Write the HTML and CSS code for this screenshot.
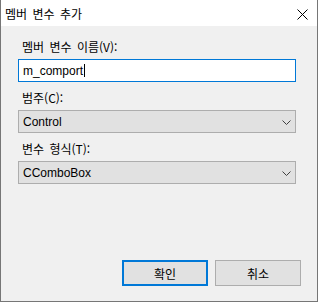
FILE: index.html
```html
<!DOCTYPE html>
<html lang="ko">
<head>
  <meta charset="UTF-8">
  <title>멤버 변수 추가</title>
  <link rel="stylesheet" href="styles.css">
</head>
<body>

  <div class="window">
    <div class="titlebar">
      <span class="title">멤버 변수 추가</span>
      <span class="close">
        <svg width="11" height="11" viewBox="0 0 11 11">
          <path d="M0.5 0.5 L10.5 10.5 M10.5 0.5 L0.5 10.5" stroke="#000" stroke-width="1" fill="none"/>
        </svg>
      </span>
    </div>

    <div class="content">
      <div class="form">
        <label class="label" for="name">멤버 변수 이름(V):</label>
        <div class="edit" id="name"><span class="value">m_comport</span><span class="caret"></span></div>

        <label class="label">범주(C):</label>
        <div class="combo">
          <span class="value">Control</span>
          <svg class="chevron" width="9" height="5" viewBox="0 0 9 5">
            <path d="M0.5 0.5 L4.5 4.5 L8.5 0.5" stroke="#404040" stroke-width="1" fill="none"/>
          </svg>
        </div>

        <label class="label">변수 형식(T):</label>
        <div class="combo">
          <span class="value">CComboBox</span>
          <svg class="chevron" width="9" height="5" viewBox="0 0 9 5">
            <path d="M0.5 0.5 L4.5 4.5 L8.5 0.5" stroke="#404040" stroke-width="1" fill="none"/>
          </svg>
        </div>
      </div>

      <div class="footer">
        <button class="btn default">확인</button>
        <button class="btn">취소</button>
      </div>
    </div>
  </div>

</body>
</html>
```

FILE: styles.css
```css
html, body {
  margin: 0;
  padding: 0;
}

body {
  font-family: "Noto Sans CJK KR", "Noto Sans", sans-serif;
  font-size: 12px;
  word-spacing: 2px;
  color: #000;
  background-color: #f0f0f0;
}

.window {
  width: 318px;
  height: 302px;
  box-sizing: border-box;
  border: 1px solid #767676;
  border-top: none;
  background-color: #f0f0f0;
  display: flex;
  flex-direction: column;
}

.titlebar {
  height: 26px;
  background-color: #fff;
  display: flex;
  align-items: center;
  justify-content: space-between;
  padding: 0 9px 0 4px;
  flex-shrink: 0;
}

.title {
  line-height: 16px;
  padding-top: 1px;
}

.close {
  display: flex;
  margin-top: 2px;
}

.content {
  flex: 1;
  display: flex;
  flex-direction: column;
}

.form {
  padding: 13px 21px 0 17px;
  display: flex;
  flex-direction: column;
}

.label {
  display: block;
  line-height: 16px;
  height: 16px;
  margin-bottom: 4px;
  padding-left: 4px;
}

.edit,
.combo {
  height: 23px;
  box-sizing: border-box;
  margin-bottom: 8px;
  display: flex;
  align-items: center;
  padding: 0 4px;
  line-height: 16px;
}

.value {
  font-family: "Liberation Sans", "Noto Sans CJK KR", sans-serif;
  word-spacing: 0;
}

.edit {
  background-color: #fff;
  border: 1px solid #0078d7;
}

.caret {
  display: inline-block;
  width: 1px;
  height: 13px;
  background-color: #000;
  margin-left: 1px;
}

.combo {
  background-color: #e1e1e1;
  border: 1px solid #adadad;
  justify-content: space-between;
  padding-right: 4px;
}

.chevron {
  margin-top: 1px;
}

.footer {
  margin-top: auto;
  display: flex;
  justify-content: flex-end;
  gap: 7px;
  padding: 0 16px 15px 0;
}

.btn {
  width: 86px;
  height: 26px;
  box-sizing: border-box;
  background-color: #e1e1e1;
  border: 1px solid #adadad;
  font-family: inherit;
  font-size: 12px;
  word-spacing: 2px;
  color: #000;
  padding: 0;
}

.btn.default {
  border: 2px solid #0078d7;
}
```
